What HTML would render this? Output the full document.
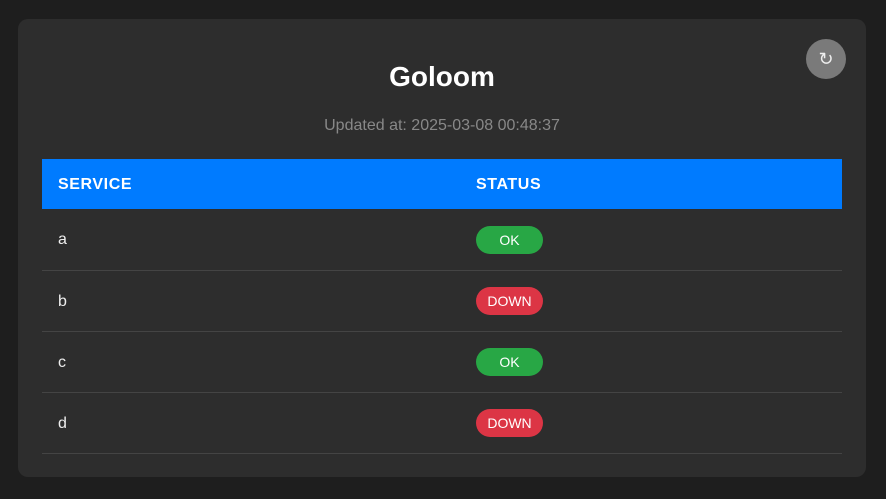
<!DOCTYPE html>
<html><head><style>
html,body{margin:0;width:886px;height:499px;background:#1e1e1e;font-family:"Liberation Sans",sans-serif;overflow:hidden}
.card{position:absolute;left:18px;top:19px;width:848px;height:458px;background:#2d2d2d;border-radius:10px}
h1{position:absolute;left:0;width:848px;top:42px;margin:0;text-align:center;color:#fff;font-size:28px;font-weight:bold;line-height:32px}
.upd{position:absolute;left:0;width:848px;top:98px;text-align:center;color:#888;font-size:16px}
.btn{position:absolute;left:788px;top:20px;width:40px;height:40px;border-radius:50%;background:#7a7a7a;color:#eee;font-size:18px;text-align:center;line-height:41px}
.tbl{position:absolute;left:24px;top:140px;width:800px}
.hd{height:50px;background:#007bff;color:#fff;font-weight:bold;font-size:16px;letter-spacing:.6px;position:relative}
.hd span,.row span{position:absolute;top:0}
.row{height:60px;border-bottom:1px solid #444;position:relative;color:#eee;font-size:16px}
.c1{left:16px}.c2{left:434px}
.hd span{line-height:51px}
.row .c1{line-height:61px}
.b{position:absolute;left:434px;top:16px;width:67px;height:28px;border-radius:14px;color:#fff;font-size:14px;text-align:center;line-height:28px}
.ok{background:#28a745}.dn{background:#dc3545}
</style></head><body>
<div class="card">
<h1>Goloom</h1>
<div class="upd">Updated at: 2025-03-08 00:48:37</div>
<div class="btn">↻</div>
<div class="tbl">
<div class="hd"><span class="c1">SERVICE</span><span class="c2">STATUS</span></div>
<div class="row" style="height:61px"><span class="c1" style="line-height:62px">a</span><div class="b ok" style="top:17px">OK</div></div>
<div class="row"><span class="c1">b</span><div class="b dn">DOWN</div></div>
<div class="row"><span class="c1">c</span><div class="b ok">OK</div></div>
<div class="row"><span class="c1">d</span><div class="b dn">DOWN</div></div>
</div>
</div>
</body></html>
